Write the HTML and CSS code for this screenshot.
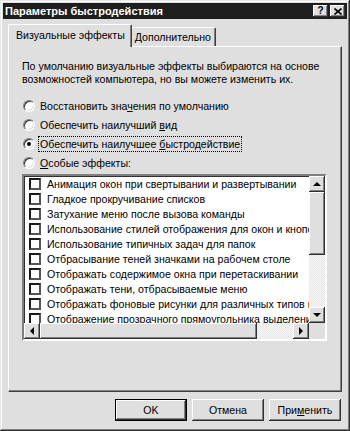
FILE: index.html
```html
<!DOCTYPE html>
<html lang="ru">
<head>
<meta charset="utf-8">
<title>Параметры быстродействия</title>
<link rel="stylesheet" href="styles.css">
</head>
<body>
<div class="window">
  <div class="titlebar">
    <span class="title">Параметры быстродействия</span>
    <div class="tbuttons">
      <span class="tbtn help">?</span>
      <span class="tbtn close">
        <svg width="8" height="7" viewBox="0 0 8 7"><path d="M0.5 0.5 L7.5 6.5 M7.5 0.5 L0.5 6.5" stroke="#000" stroke-width="1.6" fill="none"/></svg>
      </span>
    </div>
  </div>
  <div class="content">
    <div class="tabs">
      <div class="tab active">Визуальные эффекты</div>
      <div class="tab">Дополнительно</div>
    </div>
    <div class="panel">
      <p class="intro">По умолчанию визуальные эффекты выбираются на основе<br>возможностей компьютера, но вы можете изменить их.</p>
      <div class="radios">
        <div class="radio-row"><span class="radio"></span><span class="rlabel">Восстановить зна<u>ч</u>ения по умолчанию</span></div>
        <div class="radio-row"><span class="radio"></span><span class="rlabel">Обеспечить наилучший <u>в</u>ид</span></div>
        <div class="radio-row"><span class="radio checked"></span><span class="rlabel focus">Обеспечить наилучшее <u>б</u>ыстродействие</span></div>
        <div class="radio-row"><span class="radio"></span><span class="rlabel"><u>О</u>собые эффекты:</span></div>
      </div>
      <div class="listbox">
        <div class="items">
          <div class="item"><span class="cb"></span>Анимация окон при свертывании и развертывании</div>
          <div class="item"><span class="cb"></span>Гладкое прокручивание списков</div>
          <div class="item"><span class="cb"></span>Затухание меню после вызова команды</div>
          <div class="item"><span class="cb"></span>Использование стилей отображения для окон и кнопок</div>
          <div class="item"><span class="cb"></span>Использование типичных задач для папок</div>
          <div class="item"><span class="cb"></span>Отбрасывание теней значками на рабочем столе</div>
          <div class="item"><span class="cb"></span>Отображать содержимое окна при перетаскивании</div>
          <div class="item"><span class="cb"></span>Отображать тени, отбрасываемые меню</div>
          <div class="item"><span class="cb"></span>Отображать фоновые рисунки для различных типов папок</div>
          <div class="item"><span class="cb"></span>Отображение прозрачного прямоугольника выделения</div>
        </div>
        <div class="vscroll">
          <span class="sbtn"><span class="arr up"></span></span>
          <span class="thumb vthumb"></span>
          <span class="track"></span>
          <span class="sbtn"><span class="arr down"></span></span>
        </div>
        <div class="hscroll">
          <span class="sbtn"><span class="arr left"></span></span>
          <span class="thumb hthumb"></span>
          <span class="track"></span>
          <span class="sbtn"><span class="arr right"></span></span>
        </div>
        <div class="corner"></div>
      </div>
    </div>
    <div class="buttons">
      <button class="btn default">OK</button>
      <button class="btn">Отмена</button>
      <button class="btn">При<u>м</u>енить</button>
    </div>
  </div>
</div>
</body>
</html>
```
FILE: styles.css
```css
* { box-sizing: border-box; }
html, body { margin: 0; padding: 0; background: #dfdfdf; }
body { font-family: "Liberation Sans", Arial, sans-serif; font-size: 10.6px; color: #000; }

.window {
  width: 350px;
  height: 431px;
  padding: 3px;
  background: #dfdfdf;
  box-shadow: inset -1px -1px #303030, inset 1px 1px #e8e8e8, inset -2px -2px #808080, inset 2px 2px #ffffff;
  display: flex;
  flex-direction: column;
}

.titlebar {
  height: 16px;
  background: #1e1e1e;
  display: flex;
  align-items: center;
  justify-content: space-between;
  padding: 0 2px 0 2px;
}
.title { color: #fff; font-weight: bold; font-size: 11px; }
.tbuttons { display: flex; gap: 2px; }
.tbtn {
  width: 15px; height: 12px;
  background: #dfdfdf;
  box-shadow: inset -1px -1px #303030, inset 1px 1px #fff, inset -2px -2px #808080;
  display: flex; align-items: center; justify-content: center;
  font-weight: bold; font-size: 10px; line-height: 10px;
}

.content { flex: 1; padding: 5px 5px 0 5px; display: flex; flex-direction: column; }

.tabs { height: 22px; display: flex; align-items: flex-end; }
.tab {
  height: 19px;
  padding: 0 4px 0 3px;
  display: flex; align-items: center;
  background: #dfdfdf;
  border-top: 1px solid #fff;
  border-right: 1px solid #404040;
  border-top-right-radius: 2px;
  box-shadow: inset -1px 0 #808080;
}
.tab.active {
  height: 23px;
  margin-bottom: -1px;
  padding: 0 6px 2px 7px;
  border-left: 1px solid #fff;
  border-top-left-radius: 2px;
  position: relative;
  z-index: 1;
}

.panel {
  height: 346px;
  border-top: 1px solid #fff;
  border-left: 1px solid #fff;
  border-right: 1px solid #404040;
  border-bottom: 1px solid #404040;
  box-shadow: inset -1px -1px #808080;
  padding: 13px 14px 0 13px;
  display: flex; flex-direction: column;
}

.intro { margin: 0; line-height: 13px; white-space: nowrap; }

.radios { margin-top: 10px; display: flex; flex-direction: column; }
.radio-row { height: 19px; display: flex; align-items: center; gap: 3px; }
.radio {
  width: 12px; height: 12px; margin-left: 1px;
  border-radius: 50%;
  background: #fff;
  border: 1px solid; border-color: #808080 #fff #fff #808080;
  box-shadow: inset 1px 1px #303030, inset -1px -1px #dfdfdf;
  display: flex; align-items: center; justify-content: center;
}
.radio.checked::after { content: ""; width: 4px; height: 4px; border-radius: 50%; background: #000; }
.rlabel { padding: 1px 1px; border: 1px solid transparent; line-height: 12px; }
.rlabel.focus { border: 1px dotted #000; }

.listbox {
  margin-top: 2px;
  width: 305px;
  height: 167px;
  border: 2px solid; border-color: #808080 #fff #fff #808080;
  box-shadow: inset 1px 1px #303030, inset -1px -1px #dfdfdf;
  background: #fff;
  display: grid;
  grid-template-columns: 1fr 16px;
  grid-template-rows: 1fr 16px;
}
.items { overflow: hidden; }
.item { height: 15px; display: flex; align-items: center; white-space: nowrap; padding-left: 5px; }
.cb {
  width: 12px; height: 12px; flex: none;
  margin-right: 6px;
  border: 2px solid #1a1a1a;
  border-right-color: #555; border-bottom-color: #555;
  background: #fff;
}

.vscroll, .hscroll { display: flex; background: #dfdfdf; }
.vscroll { flex-direction: column; }
.sbtn {
  width: 16px; height: 16px; flex: none;
  background: #dfdfdf;
  box-shadow: inset -1px -1px #303030, inset 1px 1px #fff, inset -2px -2px #808080;
  display: flex; align-items: center; justify-content: center;
}
.thumb {
  background: #dfdfdf;
  box-shadow: inset -1px -1px #303030, inset 1px 1px #fff, inset -2px -2px #808080;
}
.vthumb { width: 16px; height: 63px; }
.hthumb { height: 16px; width: 217px; }
.track { flex: 1; background: repeating-conic-gradient(#f6f6f6 0 25%, #e8e8e8 0 50%) 0 0 / 2px 2px; }
.corner { background: #dfdfdf; }

.arr { width: 0; height: 0; border: 4px solid transparent; }
.arr.up { border-bottom-color: #000; border-top-width: 0; margin-top: -1px; }
.arr.down { border-top-color: #000; border-bottom-width: 0; }
.arr.left { border-right-color: #000; border-left-width: 0; margin-left: -1px; }
.arr.right { border-left-color: #000; border-right-width: 0; }

.buttons { margin-top: 7px; padding-right: 1px; display: flex; justify-content: flex-end; gap: 5px; }
.btn {
  width: 72px; height: 22px;
  font-family: "Liberation Sans", Arial, sans-serif; font-size: 10.6px; color: #000;
  background: #dfdfdf;
  border: none;
  padding: 0;
  box-shadow: inset -1px -1px #303030, inset 1px 1px #fff, inset -2px -2px #808080;
}
.btn.default {
  border: 1px solid #000;
}
```
